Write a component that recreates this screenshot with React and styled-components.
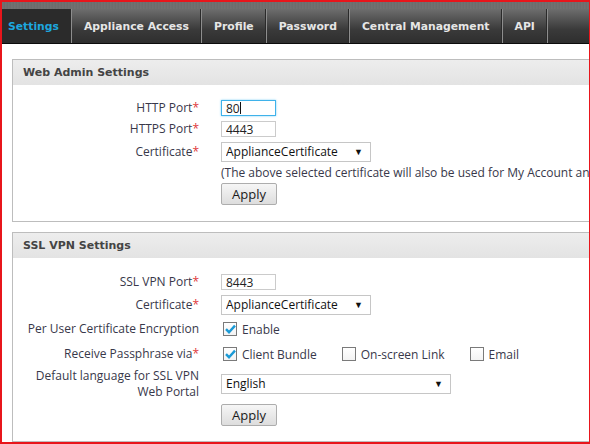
import React from "react";
import styled, { createGlobalStyle } from "styled-components";

const GlobalStyle = createGlobalStyle`
  html, body {
    margin: 0;
    padding: 0;
    overflow: hidden;
    background: #fff;
  }
`;

const Frame = styled.div`
  box-sizing: border-box;
  width: 590px;
  height: 444px;
  border: 2px solid #e8151b;
  border-right-width: 1px;
  overflow: hidden;
  background: #fff;
  font-family: "Open Sans", "Noto Sans", sans-serif;
`;

const TopStrip = styled.div`
  height: 7px;
  background: repeating-linear-gradient(
    90deg,
    #6c6c6c 0px,
    #767676 1px,
    #686868 2px,
    #717171 3px
  );
`;

const TabBar = styled.div`
  display: flex;
  height: 34px;
  background: linear-gradient(#6d6d6d, #3a3a3a 60%, #2e2e2e);
  border-bottom: 1px solid #0c0c0c;
  width: 700px;
`;

const Tab = styled.div`
  display: flex;
  align-items: center;
  padding: ${({ $first }) => ($first ? "1px 12px 0 6px" : "1px 12px 0")};
  font-family: "DejaVu Sans", Verdana, sans-serif;
  font-weight: bold;
  font-size: 10.8px;
  color: ${({ $active }) => ($active ? "#1da7de" : "#e6e6e6")};
  background: ${({ $active }) => ($active ? "#2b2b2b" : "transparent")};
  border-right: 1px solid #8d8d8d;
  box-shadow: inset -1px 0 0 #2a2a2a;
  white-space: nowrap;
`;

const Content = styled.div`
  padding: 15px 0 0 10px;
`;

const Panel = styled.section`
  width: 680px;
  border: 1px solid #bdbdbd;
  margin-bottom: 10px;
`;

const PanelHeader = styled.div`
  height: 25px;
  display: flex;
  align-items: center;
  padding-left: 10px;
  background: linear-gradient(#ededed, #e3e3e3);
  font-family: "DejaVu Sans", Verdana, sans-serif;
  font-weight: bold;
  font-size: 11px;
  color: #444;
`;

const PanelBody = styled.div`
  padding: ${({ $top }) => $top}px 0 ${({ $bottom }) => $bottom}px;
`;

const Row = styled.div`
  display: grid;
  grid-template-columns: 186px 1fr;
  column-gap: 22px;
  align-items: center;
  margin-top: ${({ $mt }) => $mt || 0}px;
  height: ${({ $h }) => $h || 16}px;
`;

const Cell = styled.div`
  display: flex;
  align-items: center;
`;

const Label = styled.div`
  text-align: right;
  font-size: 12px;
  line-height: 16px;
  color: #38384a;
  white-space: nowrap;
`;

const Req = styled.span`
  color: #e0383b;
`;

const InputWrap = styled.div`
  position: relative;
  display: flex;
  align-items: center;
`;

const TextInput = styled.input`
  display: block;
  box-sizing: border-box;
  width: 55px;
  height: 16px;
  padding: 0 4px;
  border: 1px solid ${({ $focused }) => ($focused ? "#3fb2ea" : "#cbcbcb")};
  box-shadow: ${({ $focused }) => ($focused ? "0 0 2px #7fd0f5" : "none")};
  font-family: "Open Sans", sans-serif;
  font-size: 12px;
  line-height: 14px;
  color: #222;
  outline: none;
  background: #fff;
`;

const Caret = styled.span`
  position: absolute;
  left: 19px;
  top: 2px;
  width: 1px;
  height: 12px;
  background: #111;
`;

const SelectWrap = styled.div`
  position: relative;
  box-sizing: border-box;
  width: ${({ $w }) => $w}px;
  height: 20px;
  border: 1px solid #c6c6c6;
  background: #fff;
`;

const Select = styled.select`
  display: block;
  appearance: none;
  width: 100%;
  height: 18px;
  border: none;
  padding: 0 0 0 4px;
  margin: 0;
  background: transparent;
  font-family: "Open Sans", sans-serif;
  font-size: 12px;
  line-height: 18px;
  color: #111;
  outline: none;
`;

const Arrow = styled.span`
  position: absolute;
  right: 7px;
  top: 3px;
  font-size: 9px;
  line-height: 12px;
  color: #111;
  pointer-events: none;
`;

const Note = styled.div`
  font-size: 12px;
  color: #38384a;
  white-space: nowrap;
  line-height: 16px;
`;

const Button = styled.button`
  display: block;
  box-sizing: border-box;
  width: 56px;
  height: 22px;
  border: 1px solid #adadad;
  border-radius: 2px;
  background: linear-gradient(#f6f6f6, #dddddd);
  font-family: "Open Sans", sans-serif;
  font-size: 13px;
  color: #1a1a1a;
  padding: 0;
`;

const Options = styled.div`
  display: flex;
  align-items: center;
  padding-left: 2px;
`;

const Option = styled.label`
  display: flex;
  align-items: center;
  gap: 5px;
  margin-right: 25px;
  font-size: 12px;
  color: #38384a;
`;

const Box = styled.span`
  box-sizing: border-box;
  width: 14px;
  height: 14px;
  border: 1px solid #7a7a7a;
  background: linear-gradient(#fff, #f3f3f3);
  display: inline-flex;
  align-items: center;
  justify-content: center;
`;

const Check = ({ checked, children }) => (
  <Option>
    <Box>
      {checked && (
        <svg width="11" height="10" viewBox="0 0 11 10">
          <path d="M1 5.2 L4 8.2 L10 1.6" fill="none" stroke="#1b9ad6" strokeWidth="2.4" />
        </svg>
      )}
    </Box>
    {children}
  </Option>
);

const Dropdown = ({ width, value }) => (
  <SelectWrap $w={width}>
    <Select defaultValue={value}>
      <option>{value}</option>
    </Select>
    <Arrow>▼</Arrow>
  </SelectWrap>
);

const tabs = ["Settings", "Appliance Access", "Profile", "Password", "Central Management", "API"];

export default function App() {
  return (
    <Frame>
      <GlobalStyle />
      <TopStrip />
      <TabBar>
        {tabs.map((t, i) => (
          <Tab key={t} $active={i === 0} $first={i === 0}>
            {t}
          </Tab>
        ))}
      </TabBar>
      <Content>
        <Panel>
          <PanelHeader>Web Admin Settings</PanelHeader>
          <PanelBody $top={15} $bottom={16}>
            <Row>
              <Label>HTTP Port<Req>*</Req></Label>
              <InputWrap>
                <TextInput $focused defaultValue="80" readOnly />
                <Caret />
              </InputWrap>
            </Row>
            <Row $mt={5}>
              <Label>HTTPS Port<Req>*</Req></Label>
              <Cell><TextInput defaultValue="4443" readOnly /></Cell>
            </Row>
            <Row $mt={5} $h={20}>
              <Label>Certificate<Req>*</Req></Label>
              <Dropdown width={150} value="ApplianceCertificate" />
            </Row>
            <Row $mt={2} $h={18}>
              <div />
              <Note>(The above selected certificate will also be used for My Account and User Portal)</Note>
            </Row>
            <Row $mt={1} $h={22}>
              <div />
              <Cell><Button>Apply</Button></Cell>
            </Row>
          </PanelBody>
        </Panel>
        <Panel>
          <PanelHeader>SSL VPN Settings</PanelHeader>
          <PanelBody $top={16} $bottom={15}>
            <Row>
              <Label>SSL VPN Port<Req>*</Req></Label>
              <Cell><TextInput defaultValue="8443" readOnly /></Cell>
            </Row>
            <Row $mt={5} $h={20}>
              <Label>Certificate<Req>*</Req></Label>
              <Dropdown width={150} value="ApplianceCertificate" />
            </Row>
            <Row $mt={5} $h={18}>
              <Label>Per User Certificate Encryption</Label>
              <Options>
                <Check checked>Enable</Check>
              </Options>
            </Row>
            <Row $mt={7} $h={18}>
              <Label>Receive Passphrase via<Req>*</Req></Label>
              <Options>
                <Check checked>Client Bundle</Check>
                <Check>On-screen Link</Check>
                <Check>Email</Check>
              </Options>
            </Row>
            <Row $mt={5} $h={32}>
              <Label>Default language for SSL VPN<br />Web Portal</Label>
              <Dropdown width={230} value="English" />
            </Row>
            <Row $mt={4} $h={22}>
              <div />
              <Cell><Button>Apply</Button></Cell>
            </Row>
          </PanelBody>
        </Panel>
      </Content>
    </Frame>
  );
}
